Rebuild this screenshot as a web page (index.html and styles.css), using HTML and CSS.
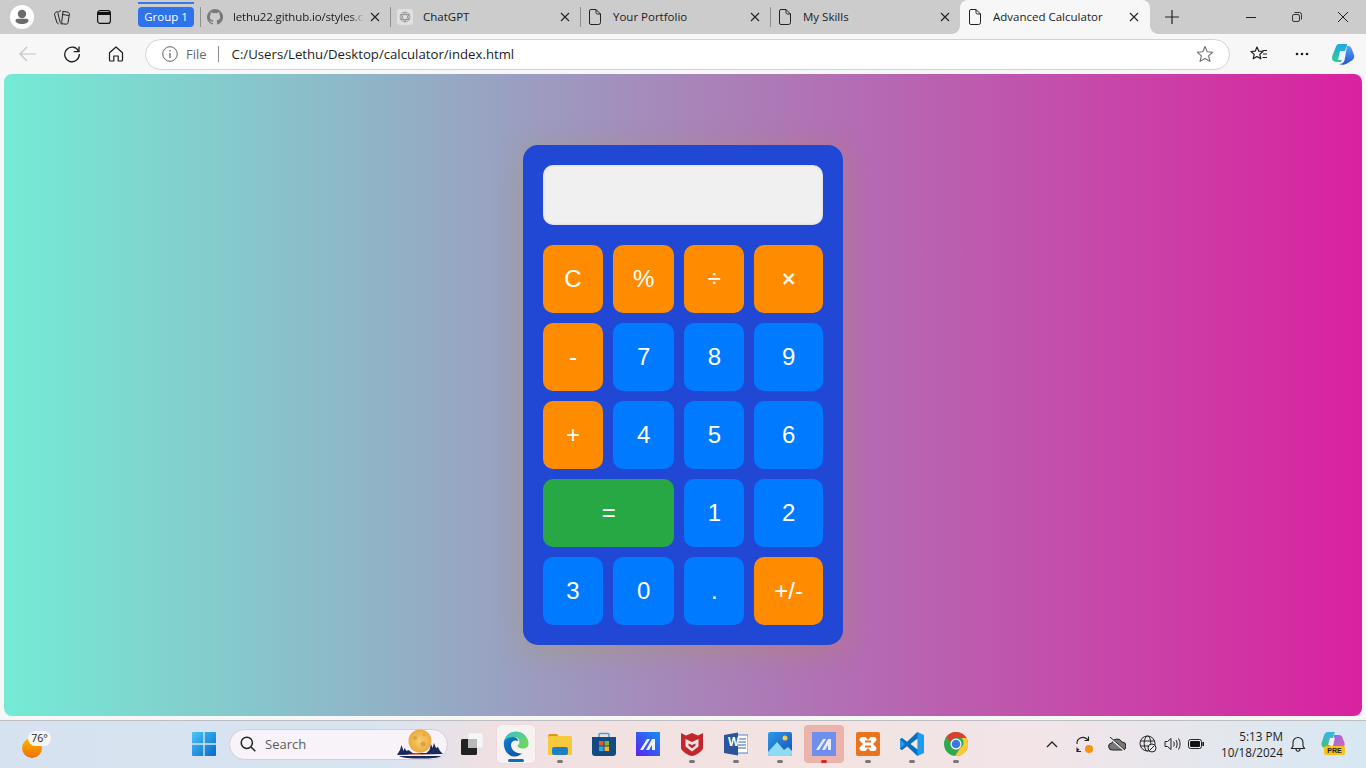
FILE: index.html
```html
<!DOCTYPE html>
<html lang="en">
<head>
<meta charset="utf-8">
<title>Advanced Calculator</title>
<link rel="stylesheet" href="styles.css">
</head>
<body>
<div class="window">
  <header class="tabstrip">
    <div class="profile"><svg width="24" height="24" viewBox="0 0 24 24"><circle cx="12" cy="12" r="12" fill="#fff"/><circle cx="12" cy="9" r="4.200" fill="#6b6b6b"/><path d="M5.500 15.500c0-1 1-1.800 2-1.800h9c1 0 2 .8 2 1.800 0 2.200-3 3.500-6.500 3.500s-6.500-1.300-6.500-3.500z" fill="#6b6b6b"/></svg></div>
    <div class="strip-btn strip-btn-collections"><svg width="16" height="15" viewBox="0 0 16 15" fill="none" stroke="#222" stroke-width="1"><path d="M3.500 1.500 1.800 2.300C.7 2.900.4 4 .7 5l2 7c.3 1 1 1.700 2 2"/><path d="M7 .7 5.200 1.300C4 1.800 3.800 2.800 4 3.800l2.200 8.500c.3 1 1.100 1.800 2.300 2"/><path d="M8.700 1.300l5.300.9c1 .2 1.600 1 1.400 2L14 12.800c-.2 1-1 1.500-2 1.400l-2.800-.4c-1-.2-1.600-1-1.500-2L9 2z" fill="#ccc"/><path d="M8.500 4.500l6.500 1"/></svg></div>
    <div class="strip-btn strip-btn-layout"><svg width="14" height="14" viewBox="0 0 14 14" fill="none" stroke="#111" stroke-width="1.200"><rect x=".6" y=".6" width="12.800" height="12.800" rx="2.500"/><path d="M1 3.500h12" stroke-width="3"/></svg></div>
    <div class="group"><span class="group-line"></span><span class="group-label">Group 1</span></div>
    <div class="tab sep">
      <svg class="fav" width="16" height="16" viewBox="0 0 16 16"><path fill="#7a7a7a" d="M8 0a8 8 0 0 0-2.530 15.590c.4.070.55-.17.55-.38v-1.340c-2.230.48-2.700-1.070-2.700-1.070-.36-.93-.89-1.170-.89-1.170-.73-.5.050-.49.050-.49.800.06 1.230.82 1.230.82.710 1.230 1.870.87 2.330.66.070-.52.280-.87.510-1.070-1.780-.2-3.640-.89-3.640-3.950 0-.87.310-1.590.820-2.150-.080-.2-.360-1.020.080-2.120 0 0 .670-.21 2.200.82a7.600 7.600 0 0 1 4 0c1.530-1.040 2.200-.82 2.200-.82.440 1.100.160 1.920.080 2.120.510.560.820 1.270.820 2.150 0 3.070-1.870 3.750-3.650 3.950.290.250.540.740.540 1.480v2.200c0 .21.150.46.550.38A8 8 0 0 0 8 0z"/></svg>
      <span class="tab-title tab-title-fade">lethu22.github.io/styles.c</span>
      <svg class="x" width="10" height="10" viewBox="0 0 10 10"><path d="M1 1l8 8M9 1 1 9" stroke="#222" stroke-width="1.100"/></svg>
    </div>
    <div class="tab sep">
      <span class="gpt"><svg width="12" height="12" viewBox="0 0 16 16" fill="none" stroke="#8a8a8a" stroke-width="1"><circle cx="8" cy="8" r="6.500"/><path d="M8 1.500 13.600 11.300H2.400zM8 14.500 2.400 4.700h11.200z"/></svg></span>
      <span class="tab-title">ChatGPT</span>
      <svg class="x" width="10" height="10" viewBox="0 0 10 10"><path d="M1 1l8 8M9 1 1 9" stroke="#222" stroke-width="1.100"/></svg>
    </div>
    <div class="tab sep">
      <svg class="page" width="12" height="16" viewBox="0 0 12 16" fill="none" stroke="#222" stroke-width="1"><path d="M2 .5h5l4.500 4.500v8.500a2 2 0 0 1-2 2h-7.500a1.500 1.500 0 0 1-1.500-1.500v-12a1.500 1.500 0 0 1 1.500-1.500zM7 .5v3a1.500 1.500 0 0 0 1.500 1.500h3"/></svg>
      <span class="tab-title">Your Portfolio</span>
      <svg class="x" width="10" height="10" viewBox="0 0 10 10"><path d="M1 1l8 8M9 1 1 9" stroke="#222" stroke-width="1.100"/></svg>
    </div>
    <div class="tab sep">
      <svg class="page" width="12" height="16" viewBox="0 0 12 16" fill="none" stroke="#222" stroke-width="1"><path d="M2 .5h5l4.500 4.500v8.500a2 2 0 0 1-2 2h-7.500a1.500 1.500 0 0 1-1.500-1.500v-12a1.500 1.500 0 0 1 1.500-1.500zM7 .5v3a1.500 1.500 0 0 0 1.500 1.500h3"/></svg>
      <span class="tab-title">My Skills</span>
      <svg class="x" width="10" height="10" viewBox="0 0 10 10"><path d="M1 1l8 8M9 1 1 9" stroke="#222" stroke-width="1.100"/></svg>
    </div>
    <div class="tab tab-active">
      <svg class="page" width="12" height="16" viewBox="0 0 12 16" fill="none" stroke="#222" stroke-width="1"><path d="M2 .5h5l4.500 4.500v8.500a2 2 0 0 1-2 2h-7.500a1.500 1.500 0 0 1-1.500-1.500v-12a1.500 1.500 0 0 1 1.500-1.500zM7 .5v3a1.500 1.500 0 0 0 1.500 1.500h3"/></svg>
      <span class="tab-title">Advanced Calculator</span>
      <svg class="x" width="10" height="10" viewBox="0 0 10 10"><path d="M1 1l8 8M9 1 1 9" stroke="#222" stroke-width="1.100"/></svg>
    </div>
    <div class="new-tab"><svg width="14" height="14" viewBox="0 0 14 14"><path d="M7 0v14M0 7h14" stroke="#222" stroke-width="1.200"/></svg></div>
    <div class="win-controls">
      <span class="win-btn"><svg width="10" height="10" viewBox="0 0 10 10"><path d="M0 5.500h10" stroke="#222" stroke-width="1"/></svg></span>
      <span class="win-btn"><svg width="10" height="10" viewBox="0 0 10 10" fill="none" stroke="#222" stroke-width=".9"><rect x=".5" y="2.500" width="7" height="7" rx="1.500"/><path d="M2.500 .5h5a2 2 0 0 1 2 2v5"/></svg></span>
      <span class="win-btn"><svg width="10" height="10" viewBox="0 0 10 10"><path d="M0 0l10 10M10 0 0 10" stroke="#222" stroke-width="1"/></svg></span>
    </div>
  </header>

  <nav class="toolbar">
    <span class="nav-btn"><svg width="18" height="16" viewBox="0 0 18 16" fill="none" stroke="#c3c3c3" stroke-width="1.200"><path d="M17 8H1M8 1 1 8l7 7"/></svg></span>
    <span class="nav-btn"><svg width="18" height="18" viewBox="0 0 18 18" fill="none" stroke="#1c1c1c" stroke-width="1.300"><path d="M15.700 6.500A7.300 7.300 0 1 0 16.300 9"/><path d="M16 1.500v5.200h-5.200"/></svg></span>
    <span class="nav-btn"><svg width="16" height="16" viewBox="0 0 16 16" fill="none" stroke="#1c1c1c" stroke-width="1.200"><path d="M1.500 6.800 8 1l6.500 5.800V14a1 1 0 0 1-1 1H10.200V10H5.800v5H2.500a1 1 0 0 1-1-1z" stroke-linejoin="round"/></svg></span>
    <div class="address">
      <svg class="info" width="16" height="16" viewBox="0 0 16 16" fill="none" stroke="#666" stroke-width="1"><circle cx="8" cy="8" r="7.300"/><path d="M8 7v5" stroke-width="1.300"/><circle cx="8" cy="4.800" r=".8" fill="#666" stroke="none"/></svg>
      <span class="file">File</span>
      <span class="addr-sep"></span>
      <span class="url">C:/Users/Lethu/Desktop/calculator/index.html</span>
      <svg class="star" width="18" height="18" viewBox="0 0 18 18" fill="none" stroke="#6e6e6e" stroke-width="1.100"><path d="M9 1.500 11.200 6.700l5.600.5-4.200 3.700 1.300 5.500L9 13.500l-4.900 2.900 1.300-5.500L1.200 7.200l5.600-.5z" stroke-linejoin="round"/></svg>
    </div>
    <span class="tool-btn"><svg width="18" height="18" viewBox="0 0 18 18" fill="none" stroke="#1c1c1c" stroke-width="1.200"><path d="M7 2 8.800 6.200l4.200.3-3.200 2.900 1 4.400L7 11.500l-3.800 2.300 1-4.400L1 6.500l4.200-.3z" stroke-linejoin="round"/><path d="M12.500 5.500h4.500M13 9h4M12.500 12.500h4.500"/></svg></span>
    <span class="tool-btn tool-btn-dots"><svg width="14" height="4" viewBox="0 0 14 4" fill="#1c1c1c"><circle cx="2" cy="2" r="1.300"/><circle cx="7" cy="2" r="1.300"/><circle cx="12" cy="2" r="1.300"/></svg></span>
    <span class="tool-btn tool-btn-last"><svg width="24" height="24" viewBox="0 0 24 24"><defs><linearGradient id="cp1" x1="0" y1="0" x2="0" y2="1"><stop offset="0" stop-color="#1da8e8"/><stop offset="1" stop-color="#31cf8e"/></linearGradient><linearGradient id="cp2" x1="0" y1="0" x2="0" y2="1"><stop offset="0" stop-color="#5aa4f2"/><stop offset="1" stop-color="#1a55d8"/></linearGradient></defs><path d="M8 2h7c1 0 1.500.5 1 1.500L10 20H6c-3 0-5-1.500-5-4 0-1 .3-2.500 1-4l3-7.500C5.700 2.800 6.500 2 8 2z" fill="url(#cp1)"/><path d="M16 4h1.500c1.500 0 2.500 1 3 2.300L23 13c.8 2.500-.8 5-3 6l-5 3c-1.500.8-3 1-5 .5L8 22c3 0 4.500-1 5.500-3.500z" fill="url(#cp2)"/><path d="M9 9h6l-3 9H7z" fill="#e9f4fb"/></svg></span>
  </nav>

  <main class="viewport">
    <section class="page-area">
      <div class="calculator">
        <input class="display" type="text" aria-label="Display" readonly>
        <div class="keys">
          <button class="key op">C</button>
          <button class="key op">%</button>
          <button class="key op">÷</button>
          <button class="key op heavy">×</button>
          <button class="key op">-</button>
          <button class="key">7</button>
          <button class="key">8</button>
          <button class="key">9</button>
          <button class="key op">+</button>
          <button class="key">4</button>
          <button class="key">5</button>
          <button class="key">6</button>
          <button class="key equals">=</button>
          <button class="key">1</button>
          <button class="key">2</button>
          <button class="key">3</button>
          <button class="key">0</button>
          <button class="key">.</button>
          <button class="key op">+/-</button>
        </div>
      </div>
    </section>
  </main>

  <footer class="taskbar">
    <div class="weather">
      <span class="sun"></span>
      <span class="temp">76°</span>
    </div>
    <svg class="winlogo" width="24" height="24" viewBox="0 0 24 24"><defs><linearGradient id="wl" x1="0" y1="0" x2="1" y2="1"><stop offset="0" stop-color="#48c6f8"/><stop offset="1" stop-color="#0668c8"/></linearGradient></defs><path fill="url(#wl)" d="M0 1a1 1 0 0 1 1-1h10.300v11.300H0zM12.700 0H23a1 1 0 0 1 1 1v10.300H12.700zM0 12.700h11.300V24H1a1 1 0 0 1-1-1zM12.700 12.700H24V23a1 1 0 0 1-1 1H12.700z"/></svg>
    <div class="search">
      <svg width="16" height="16" viewBox="0 0 16 16" fill="none" stroke="#222" stroke-width="1.500"><circle cx="6.800" cy="6.800" r="5.600"/><path d="m11 11 4.300 4.300"/></svg>
      <span class="search-text">Search</span>
      <svg class="moon" width="46" height="30" viewBox="0 0 46 30"><defs><radialGradient id="mn"><stop offset="0" stop-color="#f7d070"/><stop offset="1" stop-color="#eaa93c"/></radialGradient></defs><circle cx="23" cy="12" r="11.500" fill="url(#mn)"/><circle cx="18" cy="9" r="2" fill="#dca045"/><circle cx="26" cy="15" r="2.500" fill="#dca045"/><circle cx="27" cy="6" r="1.300" fill="#dca045"/><path d="M0 26l3-5 1.500-5 2 6 1-3 2 3 2-1 4 3 14 0 3-3 1.500-6 1.500 4 1.500-5 2 5 2-1 2 4 3 3z" fill="#1a2a5c"/><path d="M2 27h42c-3 2-9 2.500-20 2.500S6 29 2 27z" fill="#1a2a5c"/><path d="M10 26c6-2 14-2 18 0z" fill="#d98a70"/></svg>
    </div>
    <div class="apps">
      <span class="app"><svg width="24" height="24" viewBox="0 0 24 24"><rect x="8" y="1" width="15" height="15" rx="1.500" fill="#f6f6f6" stroke="#dcdcdc" stroke-width=".5"/><rect x="1" y="7" width="16" height="16" rx="1.500" fill="#222"/><rect x="8" y="7" width="9" height="9" fill="#b9b9b9"/></svg></span>
      <span class="app app-edge"><svg width="26" height="26" viewBox="0 0 26 26"><defs><linearGradient id="e1" x1="0" y1="0" x2="1" y2="1"><stop offset="0" stop-color="#0f7fd0"/><stop offset="1" stop-color="#0a4f9c"/></linearGradient><linearGradient id="e2" x1="0" y1="0" x2="1" y2=".6"><stop offset="0" stop-color="#2fc0d8"/><stop offset="1" stop-color="#6cd760"/></linearGradient></defs><path d="M13 .5C20 .5 25.500 6 25.500 13c0 2.500-2 4.500-5.500 4.500-3 0-5.500-1-5.500-2.500 0-1 2-1.500 2-4 0-3-3-5-6-5C6 6 2 9 .8 11 1.500 5 6.500.5 13 .5z" fill="url(#e2)"/><path d="M.8 11C2 8 6 6 10 6c3 0 5 2 5 4-3-1.500-7 0-7 4 0 5 5 9 11 8.500-2 1.500-4 3-7 3C5 25.500.5 19.500.8 11z" fill="url(#e1)"/></svg><i class="dot dot-open"></i></span>
      <span class="app"><svg width="24" height="22" viewBox="0 0 24 22"><path d="M0 3a2 2 0 0 1 2-2h7l2 3h-11z" fill="#d99a10"/><rect y="3" width="24" height="19" rx="1.500" fill="#f8c93c"/><rect x="4" y="14" width="16" height="8" rx="2" fill="#1f7fc4"/></svg><i class="dot"></i></span>
      <span class="app"><svg width="24" height="24" viewBox="0 0 24 24"><path d="M7 5V2.500a1 1 0 0 1 1-1h8a1 1 0 0 1 1 1V5" fill="none" stroke="#3ea4dc" stroke-width="1.500"/><path d="M0 5h24v16a3 3 0 0 1-3 3H3a3 3 0 0 1-3-3z" fill="#134a80"/><rect x="7" y="9" width="4.500" height="4.500" fill="#ea5432"/><rect x="12.500" y="9" width="4.500" height="4.500" fill="#7ab92f"/><rect x="7" y="14.500" width="4.500" height="4.500" fill="#2aa8ec"/><rect x="12.500" y="14.500" width="4.500" height="4.500" fill="#fdb813"/></svg></span>
      <span class="app"><svg width="24" height="24" viewBox="0 0 24 24"><defs><linearGradient id="ma" x1="0" y1="1" x2="1" y2="0"><stop offset="0" stop-color="#5a22f0"/><stop offset="1" stop-color="#1490f0"/></linearGradient></defs><rect width="24" height="24" fill="url(#ma)"/><path d="M4 18 11 7h3L7 18zM10 18l6-11h3v11h-3v-5l-3 5z" fill="#eef4ff"/></svg></span>
      <span class="app"><svg width="22" height="24" viewBox="0 0 22 24"><path d="M0 1 5 3.500 11 1l6 2.500L22 1v15c0 3-8 8-11 8S0 19 0 16z" fill="#c0282e"/><path d="M4.500 7 11 10l6.500-3v7.500l-6.500 5-6.500-5z" fill="#f2e2e0"/><path d="M7.500 11.500 11 13l3.500-1.500v2L11 16.500l-3.500-3z" fill="#c0282e"/></svg><i class="dot"></i></span>
      <span class="app"><svg width="24" height="24" viewBox="0 0 24 24"><rect x="9" y="3" width="15" height="18" fill="#fff" stroke="#3a65b0" stroke-width=".8"/><path d="M14 7h8M14 10h8M14 13h8M14 16h8" stroke="#3a65b0" stroke-width="1.200"/><path d="M0 3 14 .5v23L0 21z" fill="#2a5699"/></svg><span class="word-w">W</span><i class="dot"></i></span>
      <span class="app"><svg width="24" height="24" viewBox="0 0 24 24"><defs><linearGradient id="ph" x1="0" y1="0" x2="1" y2="1"><stop offset="0" stop-color="#2b9ce8"/><stop offset="1" stop-color="#1b4fb8"/></linearGradient></defs><rect width="24" height="24" rx="2" fill="url(#ph)"/><path d="M0 20 9 10l7 8 4-3 4 4v3a2 2 0 0 1-2 2H2a2 2 0 0 1-2-2z" fill="#8ddcf4"/><circle cx="17" cy="6" r="2.500" fill="#ffcb45"/></svg><i class="dot"></i></span>
      <span class="app app-active"><svg width="24" height="24" viewBox="0 0 24 24"><rect width="24" height="24" fill="#6d8fee"/><path d="M4 18 11 7h3L7 18zM10 18l6-11h3v11h-3v-5l-3 5z" fill="#e9ecf8"/></svg><i class="dot dot-red"></i></span>
      <span class="app"><svg width="24" height="24" viewBox="0 0 24 24"><rect width="24" height="24" rx="2" fill="#e8741e"/><path d="M6 5h3.500L12 8l2.500-3H18a2.500 2.500 0 0 1 1.500 4.500L17 12l2.500 2.500A2.500 2.500 0 0 1 18 19h-3.500L12 16l-2.500 3H6a2.500 2.500 0 0 1-1.500-4.500L7 12 4.500 9.500A2.500 2.500 0 0 1 6 5z" fill="#fff"/><path d="M9 9.500h6M9 14.500h6" stroke="#e8741e" stroke-width="2"/></svg><i class="dot"></i></span>
      <span class="app"><svg width="24" height="24" viewBox="0 0 24 24"><path d="M17.500 0 24 3v18l-6.500 3L7 14l-5 4-2-1.200V7.200L2 6l5 4z" fill="#1f9cf0"/><path d="M17.500 0 7 10l-5-4-2 1.200 5 4.800-5 4.800L2 18l5-4 10.500 10z" fill="#0a6fb8"/><path d="M17.500 6.500 10.500 12l7 5.500z" fill="#f0ebe8"/></svg><i class="dot"></i></span>
      <span class="app"><svg width="24" height="24" viewBox="0 0 24 24"><circle cx="12" cy="12" r="12" fill="#2fa84f"/><path d="M12 0a12 12 0 0 1 10.400 6H12a6 6 0 0 0-5.700 4L2.400 5A12 12 0 0 1 12 0z" fill="#e33b2e"/><path d="M22.400 6A12 12 0 0 1 11 24l5.200-8a6 6 0 0 0 1-10z" fill="#fcc934"/><circle cx="12" cy="12" r="5.500" fill="#fff"/><circle cx="12" cy="12" r="4.300" fill="#3b78e7"/></svg><i class="dot"></i></span>
    </div>
    <div class="tray">
      <svg class="chev" width="12" height="8" viewBox="0 0 12 8" fill="none" stroke="#222" stroke-width="1.300"><path d="M1 7l5-5 5 5"/></svg>
      <span class="sync"><svg width="18" height="18" viewBox="0 0 18 18" fill="none" stroke="#222" stroke-width="1.100"><path d="M3 9a6 6 0 0 1 10-5l1.500 1.500M14.500 1.500v4h-4M7 16.500 3 16.500v-4M3 16l2-2"/></svg><i class="badge"></i></span>
      <svg class="cloud" width="18" height="14" viewBox="0 0 18 14"><path d="M4.500 13A3.500 3.500 0 0 1 3.800 6 5.500 5.500 0 0 1 14 5a4 4 0 0 1 0 8z" fill="#777" stroke="#222"/><path d="M2 1l14 12" stroke="#eee" stroke-width="2"/><path d="M2 0l15 13" stroke="#222" stroke-width="1"/></svg>
      <svg class="globe" width="18" height="18" viewBox="0 0 18 18" fill="none" stroke="#222" stroke-width="1"><circle cx="8.500" cy="8.500" r="7.500"/><ellipse cx="8.500" cy="8.500" rx="3.300" ry="7.500"/><path d="M1.500 6h14M1.500 11h14"/><circle cx="13" cy="13" r="4" fill="#e9eef2"/><path d="m10.500 15.500 5-5"/></svg>
      <svg class="vol" width="17" height="14" viewBox="0 0 17 14" fill="none" stroke="#222" stroke-width="1"><path d="M1 4.500h2.500L7 1.500v11l-3.500-3H1z"/><path d="M9.500 4.500c1 1.500 1 3.500 0 5M12 3c1.500 2.500 1.500 5.500 0 8M14.500 1.500c2 3.500 2 7.500 0 11"/></svg>
      <svg class="batt" width="16" height="10" viewBox="0 0 16 10"><rect x=".5" y=".5" width="13" height="9" rx="2" fill="none" stroke="#222"/><rect x="2" y="2" width="10" height="6" rx="1" fill="#111"/><rect x="14.300" y="3" width="1.700" height="4" fill="#222"/></svg>
      <div class="clock"><span>5:13 PM</span><span>10/18/2024</span></div>
      <svg class="bell" width="16" height="17" viewBox="0 0 16 17" fill="none" stroke="#222" stroke-width="1.100"><path d="M1.500 12.500h13l-1.500-2.500V6.500a5 5 0 0 0-10 0V10zM6 13c0 3 4 3 4 0"/></svg>
      <span class="copilot"><svg width="24" height="18" viewBox="0 0 24 18"><defs><linearGradient id="c3" x1="0" y1="0" x2="0" y2="1"><stop offset="0" stop-color="#34b5e8"/><stop offset="1" stop-color="#48c078"/></linearGradient><linearGradient id="c4" x1="0" y1="0" x2="1" y2="1"><stop offset="0" stop-color="#8a6fe8"/><stop offset="1" stop-color="#e560b0"/></linearGradient></defs><path d="M7 0h7L8 16H5c-3 0-5-2-4.500-5L3 3.500C3.500 1.500 5 0 7 0z" fill="url(#c3)"/><path d="M13 3h5c2 0 3 1 3.500 2.500L23.500 11c.8 3-1 5-4 5H12z" fill="url(#c4)"/><path d="M9 6h5l-2 7H7z" fill="#f4eef0"/></svg><span class="pre">PRE</span></span>
    </div>
  </footer>
</div>
</body>
</html>
```
FILE: styles.css
```css
* { box-sizing: border-box; }
html, body { margin: 0; height: 100%; overflow: hidden; }
body { font-family: "Open Sans", "Noto Sans", sans-serif; color: #1c1c1c; }
.window { width: 1366px; height: 768px; display: flex; flex-direction: column; background: #f7f7f7; }

/* tab strip */
.tabstrip { height: 34px; flex: none; background: #cccccc; display: flex; align-items: center; }
.profile { width: 24px; height: 24px; margin-left: 10px; display: flex; }
.strip-btn { display: flex; }
.strip-btn-collections { margin-left: 20px; }
.strip-btn-layout { margin-left: 27px; }
.group { width: 56px; height: 34px; margin-left: 27px; margin-right: 6px; display: flex; flex-direction: column; align-items: stretch; }
.group-line { height: 2px; margin-top: 2px; background: #3a78e6; }
.group-label { height: 20px; margin-top: 3px; background: #2f73ea; color: #fff; border-radius: 4px; font-size: 11.500px; line-height: 20px; text-align: center; }
.tab { width: 190px; height: 34px; flex: none; display: flex; align-items: center; position: relative; padding-left: 7px; }
.tab.sep::before { content: ""; width: 1px; height: 20px; background: #8f8f8f; position: absolute; left: 0; top: 7px; }
.tab .fav { flex: none; }
.gpt { width: 16px; height: 16px; background: #e0e0e0; border-radius: 3px; display: flex; align-items: center; justify-content: center; flex: none; }
.page { flex: none; margin-left: 2px; }
.tab-title { font-size: 11.500px; line-height: 16px; margin-left: 10px; white-space: nowrap; overflow: hidden; flex: 1; min-width: 0; }
.tab .page + .tab-title { margin-left: 12px; }
.tab-title-fade { letter-spacing: -.15px; -webkit-mask-image: linear-gradient(90deg, #000 118px, transparent 131px); }
.x { flex: none; }
.tab .x { margin-right: 10px; }
.tab-active { background: #f7f7f7; border-radius: 8px 8px 0 0; }
.tab-active .x { margin-right: 11px; }
.tab-active::before, .tab-active::after { content: ""; position: absolute; bottom: 0; width: 8px; height: 8px; }
.tab-active::before { left: -8px; background: radial-gradient(circle at 0 0, #cccccc 7.500px, #f7f7f7 8px); }
.tab-active::after { right: -8px; background: radial-gradient(circle at 100% 0, #cccccc 7.500px, #f7f7f7 8px); }
.new-tab { display: flex; margin-left: 15px; }
.win-controls { display: flex; margin-left: auto; }
.win-btn { width: 46px; display: flex; justify-content: center; }

/* toolbar */
.toolbar { height: 38px; flex: none; padding-top: 2px; display: flex; align-items: center; background: #f7f7f7; }
.nav-btn { width: 44px; display: flex; justify-content: center; flex: none; }
.nav-btn:first-child { margin-left: 6px; }
.address { width: 1085px; height: 31px; flex: none; margin-left: 7px; margin-right: 7px; background: #fff; border: 1px solid #d2d2d2; border-radius: 16px; display: flex; align-items: center; padding-left: 16px; }
.info { flex: none; }
.file { font-size: 13px; color: #6a6a6a; margin-left: 8px; }
.addr-sep { width: 1px; height: 16px; background: #8a8a8a; margin-left: 11px; }
.url { font-size: 13.200px; margin-left: 13px; color: #1c1c1c; }
.star { margin-left: auto; margin-right: 15px; }
.tool-btn { width: 44px; flex: none; display: flex; justify-content: center; align-items: center; }
.tool-btn-dots { width: 42px; }
.tool-btn-last { width: 40px; }

/* page */
.viewport { flex: 1; padding: 2px 4px 4px; background: #f7f7f7; min-height: 0; }
.page-area { height: 100%; border-radius: 8px; background: linear-gradient(90deg, #74ebd5, #da219f); display: flex; align-items: center; justify-content: center; }
.calculator { width: 320px; padding: 20px; background: #2048d4; border-radius: 15px; box-shadow: 0 5px 30px rgba(170, 155, 30, .3); font-family: "Liberation Sans", Arial, sans-serif; }
.display { display: block; width: 100%; height: 60px; border: none; background: #f0f0f0; border-radius: 10px; box-shadow: inset 0 0 3px rgba(0, 0, 0, .15); margin-bottom: 20px; padding: 10px; font-size: 32px; }
.keys { display: grid; grid-template-columns: repeat(4, 1fr); gap: 10px; }
.key { border: none; border-radius: 10px; padding: 20px; font-family: inherit; font-size: 24px; line-height: 28px; height: 68px; color: #fff; background: #007bff; }
.op { background: #ff8c00; }
.heavy { -webkit-text-stroke: .4px #fff; }
.equals { background: #28a745; grid-column: span 2; }

/* taskbar */
.taskbar { height: 48px; flex: none; padding-bottom: 1px; border-top: 1px solid #bdbdc4; background: linear-gradient(90deg, #d6e2ef 0, #d9e4f1 28%, #f0e0e2 36%, #f3e3e1 60%, #f2e5e8 76%, #d7e8f2 100%); display: flex; align-items: center; }
.weather { width: 44px; height: 30px; margin-left: 20px; position: relative; flex: none; }
.sun { position: absolute; left: 2px; top: 9px; width: 20px; height: 20px; border-radius: 50%; background: linear-gradient(#fbb900, #ee6f00); }
.temp { position: absolute; left: 8px; top: 2px; width: 23px; height: 15px; border-radius: 8px; background: #f8f6f2; font-size: 10.500px; line-height: 15px; text-align: center; }
.winlogo { margin-left: 128px; flex: none; }
.search { width: 219px; height: 31px; margin-left: 13px; border-radius: 16px; background: #f8f3f8; border: 1px solid #d2cfd8; display: flex; align-items: center; padding-left: 10px; flex: none; }
.search-text { font-size: 13px; color: #5c5c5c; margin-left: 9px; }
.moon { margin-left: auto; margin-right: 4px; }
.apps { display: flex; margin-left: 2px; flex: none; }
.app { width: 44px; height: 38px; display: flex; align-items: center; justify-content: center; position: relative; border-radius: 4px; }
.app-edge { width: 38px; margin: 0 3px; background: #f7f2f1; box-shadow: 0 0 1px rgba(0, 0, 0, .2); }
.app-active { width: 40px; margin: 0 2px; background: #eab3ac; }
.dot { position: absolute; left: 50%; bottom: 0; width: 6px; height: 3px; margin-left: -3px; border-radius: 2px; background: #777; }
.dot-open { width: 16px; margin-left: -8px; background: #0f6cbd; bottom: 1px; }
.dot-red { background: #d8261c; }
.word-w { position: absolute; left: 14px; top: 10px; font: bold 12px "Liberation Sans", sans-serif; color: #fff; }
.tray { display: flex; align-items: center; flex: 1; min-width: 0; }
.chev { margin-left: 68px; flex: none; }
.sync { position: relative; display: flex; margin-left: 16px; flex: none; }
.badge { position: absolute; right: -1px; bottom: 0; width: 8px; height: 8px; border-radius: 50%; background: #f7930e; }
.cloud { margin-left: 16px; flex: none; }
.globe { margin-left: 13px; flex: none; }
.vol { margin-left: 7px; flex: none; }
.batt { margin-left: 7px; flex: none; }
.clock { width: 72px; margin-left: 7px; display: flex; flex-direction: column; align-items: flex-end; font-size: 11.700px; line-height: 16px; flex: none; }
.bell { margin-left: 7px; flex: none; }
.copilot { position: relative; display: flex; margin-left: 15px; width: 24px; height: 24px; flex: none; }
.pre { position: absolute; left: 3px; top: 14px; width: 21px; height: 9px; border-radius: 2px; background: #f7c217; font: bold 7px/9px "Liberation Sans", sans-serif; text-align: center; color: #222; }
```
